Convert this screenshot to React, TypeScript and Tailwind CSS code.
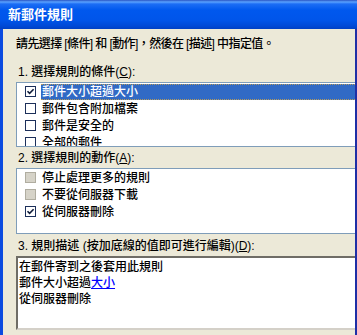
import React from "react";

const font = {
  fontFamily: '"Liberation Sans", "Noto Sans CJK TC", sans-serif',
};

function Check({ checked, disabled }: { checked?: boolean; disabled?: boolean }) {
  if (disabled) {
    return (
      <span className="inline-block w-[11px] h-[11px] shrink-0 border border-[#b0ada0] bg-[#d6d3c8]" />
    );
  }
  return (
    <span className="inline-flex w-[11px] h-[11px] shrink-0 border border-[#1c2f5a] bg-white items-center justify-center">
      {checked && (
        <svg width="9" height="9" viewBox="0 0 9 9">
          <path d="M1.5 4.2 L3.6 6.3 L7.6 2.2" stroke="#0f1c3a" strokeWidth="1.6" fill="none" />
        </svg>
      )}
    </span>
  );
}

function Row({
  text,
  checked,
  disabled,
  selected,
}: {
  text: string;
  checked?: boolean;
  disabled?: boolean;
  selected?: boolean;
}) {
  return (
    <div className="flex items-center h-[17px] pl-[8px]">
      <Check checked={checked} disabled={disabled} />
      <div
        className={
          selected
            ? "ml-[5px] flex-1 h-[16px] flex items-center pl-[1px] bg-[#316ac5] text-white border-y border-dotted border-[#b49a5c]"
            : "ml-[5px] flex-1 h-[16px] flex items-center pl-[1px] text-black"
        }
      >
        {text}
      </div>
    </div>
  );
}

function Label({ pre, key1, post }: { pre: string; key1: string; post: string }) {
  return (
    <div className="leading-[14px] h-[14px] mb-[3px] pl-[2px]">
      {pre}
      <span className="underline">{key1}</span>
      {post}
    </div>
  );
}

export default function App() {
  return (
    <div
      className="w-[357px] h-[335px] flex flex-col bg-[#ece9d8] text-[12px] font-medium text-black overflow-hidden"
      style={font}
    >
      <div className="h-[29px] shrink-0 flex items-center pl-[8px] bg-[linear-gradient(180deg,#2a55c4_0px,#5aa2ff_2px,#1c6df5_4px,#0058ee_10px,#0055ea_20px,#0049d6_26px,#0040c4_29px)]">
        <span className="text-white font-bold text-[13px]">新郵件規則</span>
      </div>
      <div className="flex-1 flex flex-col border-l-[3px] border-l-[#0b4be0] border-r-[2px] border-r-[#1e2fa6] pl-[13px]">
        <div className="pt-[8px] leading-[14px] h-[22px] tracking-[-0.6px]">
          請先選擇 [條件] 和 [動作]，然後在 [描述] 中指定值。
        </div>
        <div className="h-[14px]" />
        <Label pre="1. 選擇規則的條件(" key1="C" post="):" />
        <div className="h-[65px] border border-r-0 border-[#7f9db9] bg-white overflow-hidden">
          <Row text="郵件大小超過大小" checked selected />
          <Row text="郵件包含附加檔案" />
          <Row text="郵件是安全的" />
          <Row text="全部的郵件" />
        </div>
        <div className="h-[4px]" />
        <Label pre="2. 選擇規則的動作(" key1="A" post="):" />
        <div className="h-[66px] border border-r-0 border-[#7f9db9] bg-white overflow-hidden">
          <Row text="停止處理更多的規則" disabled />
          <Row text="不要從伺服器下載" disabled />
          <Row text="從伺服器刪除" checked />
        </div>
        <div className="h-[5px]" />
        <Label pre="3. 規則描述 (按加底線的值即可進行編輯)(" key1="D" post="):" />
        <div className="h-[74px] border-t-2 border-l-2 border-t-[#6f6d66] border-l-[#6f6d66] border-b-2 border-b-[#d4d0c8] bg-white pl-[1px] pt-[1px] leading-[16px] text-black">
          <div>在郵件寄到之後套用此規則</div>
          <div>
            郵件大小超過<span className="text-[#0000ff] underline">大小</span>
          </div>
          <div>從伺服器刪除</div>
        </div>
      </div>
    </div>
  );
}
